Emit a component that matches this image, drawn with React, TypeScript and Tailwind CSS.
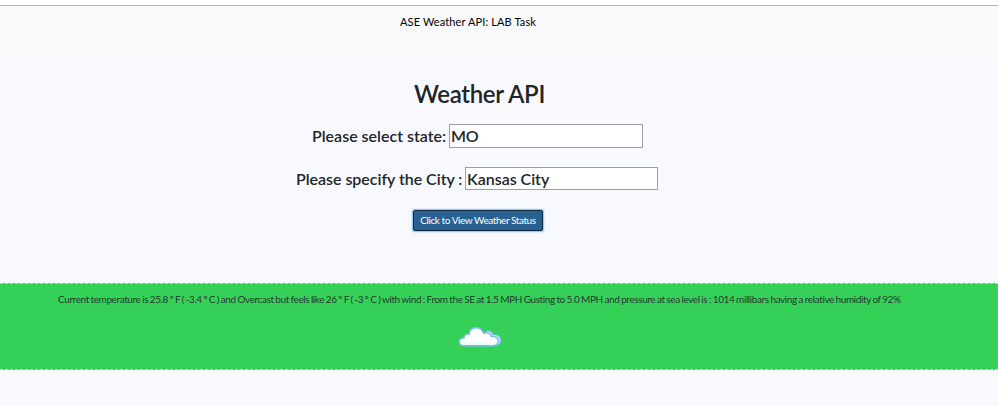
function CloudIcon() {
  return (
    <svg className="mt-[20px] ml-[458px] block" width="44" height="22" viewBox="0 0 44 22" fill="none">
      <defs>
        <linearGradient id="cloud" x1="0" y1="0" x2="0" y2="1">
          <stop offset="0" stopColor="#ffffff" />
          <stop offset="0.75" stopColor="#ffffff" />
          <stop offset="1" stopColor="#e4f2fc" />
        </linearGradient>
      </defs>
      <path d="M26 7C28 3.8 34 4 35 8.5C39.5 8 43.2 11 43 14.5C42.8 18 40 19.8 37 19.8H25Z" fill="#c3e3fa" stroke="#65b5e3" />
      <path d="M5.5 19.8C0 19.5 -.2 11.5 6 12C6 9 8.5 7.3 11 8.4C11.5 0 23-.6 25.8 7.5C29.5 5.5 33.5 8 33.4 10.7C37 9.5 41 12.5 40 16.2C39.3 19 37 19.8 34 19.8Z" fill="url(#cloud)" stroke="#7abfe8" strokeWidth="1.4" />
    </svg>
  );
}

export default function App() {
  return (
    <div className="h-[406px] overflow-hidden bg-[#f8f9ff] font-['Lato',sans-serif] text-[#212529]">
      <div className="h-[6px] border-b border-[#b4b4b4] bg-white" />
      <header className="h-[53px] bg-[#f8f9fb] pt-[8px] pl-[400px] text-[11px] leading-4 tracking-[0.12px] text-black">ASE Weather API: LAB Task</header>
      <main className="h-[224px]">
        <h1 className="pt-[21px] pl-[414px] text-[24px] leading-[28px] font-semibold tracking-[-0.35px]">Weather API</h1>
        <div className="mt-[16px] flex h-6 items-center pl-[312px] text-[16px] font-semibold">
          <span className="w-[137px] whitespace-nowrap">Please select state:</span>
          <input className="h-6 w-[194px] border border-[#a0a0a0] bg-white px-px font-semibold tracking-[-0.2px]" defaultValue="MO" />
        </div>
        <div className="mt-[19px] flex h-[23px] items-center pl-[296px] text-[16px] font-semibold">
          <span className="w-[169px] tracking-[-0.03px] whitespace-nowrap">Please specify the City :</span>
          <input className="h-[23px] w-[193px] border border-[#a0a0a0] bg-white px-px font-semibold tracking-[-0.03px]" defaultValue="Kansas City" />
        </div>
        <button className="mt-[20px] ml-[413px] block h-[21px] w-[130px] rounded-[2px] border border-[#122b40] bg-[#286090] pb-px text-[10px] leading-[18px] tracking-[-0.43px] whitespace-nowrap text-white shadow-[0_0_0_1px_#9fcaf3,0_0_2px_1px_#9fcaf3]">Click to View Weather Status</button>
      </main>
      <section className="h-[87px] border-y border-dashed border-[#b9dfc2] bg-[#35d058] pt-[8px]">
        <p className="pl-[58px] text-[10px] leading-[14px] tracking-[-0.4px] whitespace-nowrap text-[#212529]/90 [word-spacing:-0.45px]">Current temperature is 25.8 º F ( -3.4 º C ) and Overcast but feels like 26 º F ( -3 º C ) with wind : From the SE at 1.5 MPH Gusting to 5.0 MPH and pressure at sea level is : 1014 millibars having a relative humidity of 92%</p>
        <CloudIcon />
      </section>
    </div>
  );
}
